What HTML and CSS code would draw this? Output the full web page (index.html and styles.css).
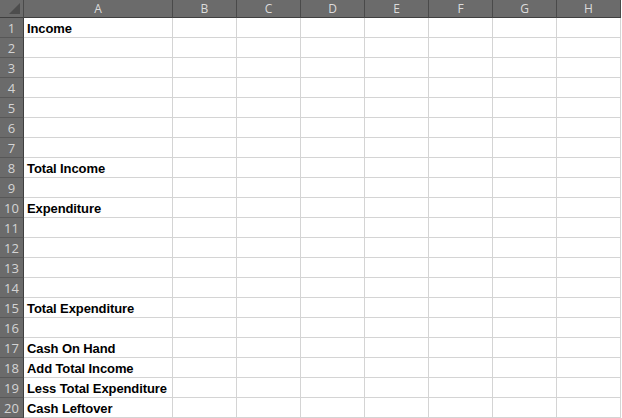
FILE: index.html
```html
<!DOCTYPE html>
<html lang="en">

<head>
  <meta charset="UTF-8">
  <meta name="viewport" content="width=device-width, initial-scale=1.0">
  <title>Budget</title>
  <link rel="stylesheet" href="styles.css">
</head>

<body>
  <div class="sheet">
    <!-- column headers -->
    <div class="corner"><span class="tri"></span></div>
    <div class="col-head">A</div>
    <div class="col-head">B</div>
    <div class="col-head">C</div>
    <div class="col-head">D</div>
    <div class="col-head">E</div>
    <div class="col-head">F</div>
    <div class="col-head">G</div>
    <div class="col-head">H</div>

    <div class="row-head">1</div>
    <div class="cell">Income</div>
    <div class="cell"></div><div class="cell"></div><div class="cell"></div><div class="cell"></div><div class="cell"></div><div class="cell"></div><div class="cell"></div>

    <div class="row-head">2</div>
    <div class="cell"></div>
    <div class="cell"></div><div class="cell"></div><div class="cell"></div><div class="cell"></div><div class="cell"></div><div class="cell"></div><div class="cell"></div>

    <div class="row-head">3</div>
    <div class="cell"></div>
    <div class="cell"></div><div class="cell"></div><div class="cell"></div><div class="cell"></div><div class="cell"></div><div class="cell"></div><div class="cell"></div>

    <div class="row-head">4</div>
    <div class="cell"></div>
    <div class="cell"></div><div class="cell"></div><div class="cell"></div><div class="cell"></div><div class="cell"></div><div class="cell"></div><div class="cell"></div>

    <div class="row-head">5</div>
    <div class="cell"></div>
    <div class="cell"></div><div class="cell"></div><div class="cell"></div><div class="cell"></div><div class="cell"></div><div class="cell"></div><div class="cell"></div>

    <div class="row-head">6</div>
    <div class="cell"></div>
    <div class="cell"></div><div class="cell"></div><div class="cell"></div><div class="cell"></div><div class="cell"></div><div class="cell"></div><div class="cell"></div>

    <div class="row-head">7</div>
    <div class="cell"></div>
    <div class="cell"></div><div class="cell"></div><div class="cell"></div><div class="cell"></div><div class="cell"></div><div class="cell"></div><div class="cell"></div>

    <div class="row-head">8</div>
    <div class="cell">Total Income</div>
    <div class="cell"></div><div class="cell"></div><div class="cell"></div><div class="cell"></div><div class="cell"></div><div class="cell"></div><div class="cell"></div>

    <div class="row-head">9</div>
    <div class="cell"></div>
    <div class="cell"></div><div class="cell"></div><div class="cell"></div><div class="cell"></div><div class="cell"></div><div class="cell"></div><div class="cell"></div>

    <div class="row-head">10</div>
    <div class="cell">Expenditure</div>
    <div class="cell"></div><div class="cell"></div><div class="cell"></div><div class="cell"></div><div class="cell"></div><div class="cell"></div><div class="cell"></div>

    <div class="row-head">11</div>
    <div class="cell"></div>
    <div class="cell"></div><div class="cell"></div><div class="cell"></div><div class="cell"></div><div class="cell"></div><div class="cell"></div><div class="cell"></div>

    <div class="row-head">12</div>
    <div class="cell"></div>
    <div class="cell"></div><div class="cell"></div><div class="cell"></div><div class="cell"></div><div class="cell"></div><div class="cell"></div><div class="cell"></div>

    <div class="row-head">13</div>
    <div class="cell"></div>
    <div class="cell"></div><div class="cell"></div><div class="cell"></div><div class="cell"></div><div class="cell"></div><div class="cell"></div><div class="cell"></div>

    <div class="row-head">14</div>
    <div class="cell"></div>
    <div class="cell"></div><div class="cell"></div><div class="cell"></div><div class="cell"></div><div class="cell"></div><div class="cell"></div><div class="cell"></div>

    <div class="row-head">15</div>
    <div class="cell">Total Expenditure</div>
    <div class="cell"></div><div class="cell"></div><div class="cell"></div><div class="cell"></div><div class="cell"></div><div class="cell"></div><div class="cell"></div>

    <div class="row-head">16</div>
    <div class="cell"></div>
    <div class="cell"></div><div class="cell"></div><div class="cell"></div><div class="cell"></div><div class="cell"></div><div class="cell"></div><div class="cell"></div>

    <div class="row-head">17</div>
    <div class="cell">Cash On Hand</div>
    <div class="cell"></div><div class="cell"></div><div class="cell"></div><div class="cell"></div><div class="cell"></div><div class="cell"></div><div class="cell"></div>

    <div class="row-head">18</div>
    <div class="cell">Add Total Income</div>
    <div class="cell"></div><div class="cell"></div><div class="cell"></div><div class="cell"></div><div class="cell"></div><div class="cell"></div><div class="cell"></div>

    <div class="row-head">19</div>
    <div class="cell">Less Total Expenditure</div>
    <div class="cell"></div><div class="cell"></div><div class="cell"></div><div class="cell"></div><div class="cell"></div><div class="cell"></div><div class="cell"></div>

    <div class="row-head">20</div>
    <div class="cell">Cash Leftover</div>
    <div class="cell"></div><div class="cell"></div><div class="cell"></div><div class="cell"></div><div class="cell"></div><div class="cell"></div><div class="cell"></div>
  </div>
</body>

</html>
```

FILE: styles.css
```css
* {
  box-sizing: border-box;
  margin: 0;
}

body {
  background-color: #ffffff;
  overflow: hidden;
}

.sheet {
  display: grid;
  grid-template-columns: 24px 149px repeat(7, 64px);
  grid-template-rows: 18px repeat(20, 20px);
}

.corner {
  background-color: #6b6b6b;
  border-right: 1px solid #4a4a4a;
  border-bottom: 1px solid #3f3f3f;
  position: relative;
}

.tri {
  position: absolute;
  right: 3px;
  bottom: 3px;
  width: 0;
  height: 0;
  border-left: 11px solid transparent;
  border-bottom: 11px solid #4d4d4d;
}

.col-head {
  background-color: #6b6b6b;
  border-right: 1px solid #4a4a4a;
  border-bottom: 1px solid #3f3f3f;
  color: #dcdcdc;
  font-family: "Open Sans", "DejaVu Sans", sans-serif;
  font-size: 12px;
  text-align: center;
  line-height: 17px;
}

.row-head {
  background-color: #6b6b6b;
  border-right: 1px solid #3f3f3f;
  border-bottom: 1px solid #575757;
  color: #d4d4d4;
  font-family: "Open Sans", "DejaVu Sans", sans-serif;
  font-size: 13px;
  text-align: center;
  line-height: 20px;
}

.cell {
  border-right: 1px solid #d4d4d4;
  border-bottom: 1px solid #d4d4d4;
  padding-left: 3px;
  padding-top: 1px;
  font-family: "Liberation Sans", Arial, sans-serif;
  font-weight: bold;
  font-size: 13px;
  letter-spacing: -0.1px;
  line-height: 19px;
  color: #000000;
  white-space: nowrap;
}
```
